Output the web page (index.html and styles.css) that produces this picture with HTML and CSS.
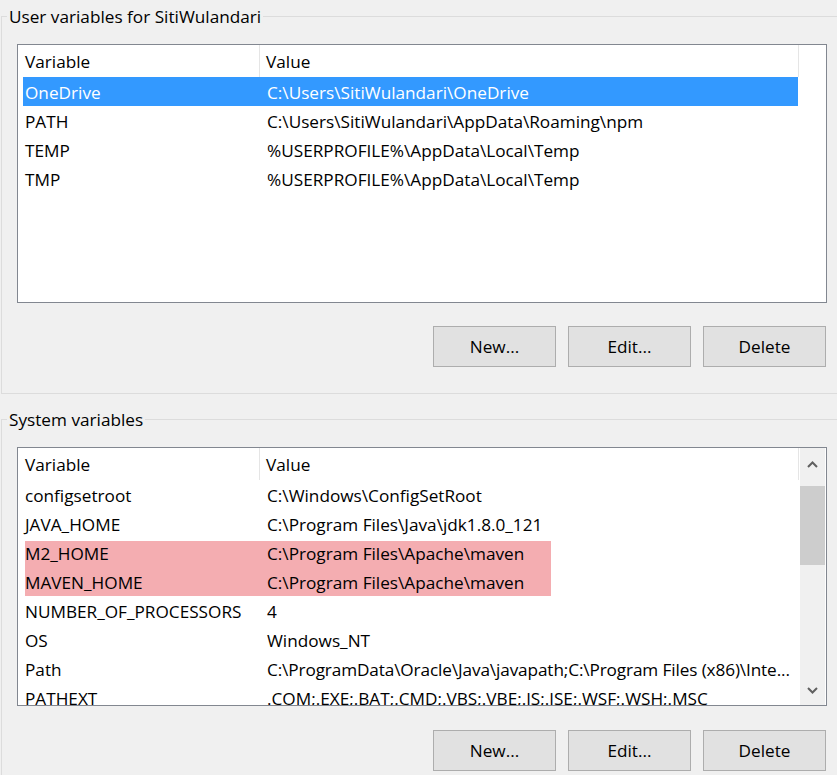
FILE: index.html
```html
<!DOCTYPE html>
<html>
<head>
<meta charset="utf-8">
<link rel="stylesheet" href="styles.css">
</head>
<body>
<fieldset class="group group-user">
  <legend>User variables for SitiWulandari</legend>
  <div class="panel">
    <div class="list">
      <div class="list-body">
        <div class="header"><div class="cell c-var">Variable</div><div class="cell c-val">Value</div></div>
        <div class="row selected"><div class="cell c-var">OneDrive</div><div class="cell c-val">C:\Users\SitiWulandari\OneDrive</div></div>
        <div class="row"><div class="cell c-var">PATH</div><div class="cell c-val">C:\Users\SitiWulandari\AppData\Roaming\npm</div></div>
        <div class="row"><div class="cell c-var">TEMP</div><div class="cell c-val">%USERPROFILE%\AppData\Local\Temp</div></div>
        <div class="row"><div class="cell c-var">TMP</div><div class="cell c-val">%USERPROFILE%\AppData\Local\Temp</div></div>
      </div>
    </div>
    <div class="buttons">
      <button class="btn">New...</button>
      <button class="btn">Edit...</button>
      <button class="btn">Delete</button>
    </div>
  </div>
</fieldset>
<fieldset class="group group-system">
  <legend>System variables</legend>
  <div class="panel">
    <div class="list">
      <div class="list-body">
        <div class="annot"></div>
        <div class="header"><div class="cell c-var">Variable</div><div class="cell c-val">Value</div></div>
        <div class="row"><div class="cell c-var">configsetroot</div><div class="cell c-val">C:\Windows\ConfigSetRoot</div></div>
        <div class="row"><div class="cell c-var">JAVA_HOME</div><div class="cell c-val">C:\Program Files\Java\jdk1.8.0_121</div></div>
        <div class="row"><div class="cell c-var">M2_HOME</div><div class="cell c-val">C:\Program Files\Apache\maven</div></div>
        <div class="row"><div class="cell c-var">MAVEN_HOME</div><div class="cell c-val">C:\Program Files\Apache\maven</div></div>
        <div class="row"><div class="cell c-var">NUMBER_OF_PROCESSORS</div><div class="cell c-val">4</div></div>
        <div class="row"><div class="cell c-var">OS</div><div class="cell c-val">Windows_NT</div></div>
        <div class="row"><div class="cell c-var">Path</div><div class="cell c-val c-long">C:\ProgramData\Oracle\Java\javapath;C:\Program Files (x86)\Inte...</div></div>
        <div class="row"><div class="cell c-var">PATHEXT</div><div class="cell c-val">.COM;.EXE;.BAT;.CMD;.VBS;.VBE;.JS;.JSE;.WSF;.WSH;.MSC</div></div>
      </div>
      <div class="scrollbar">
        <div class="sb-btn sb-up"><svg width="11" height="7" viewBox="0 0 11 7"><polyline points="1,6 5.5,1.5 10,6" fill="none" stroke="#606060" stroke-width="2"/></svg></div>
        <div class="sb-track"><div class="sb-thumb"></div></div>
        <div class="sb-btn sb-down"><svg width="11" height="7" viewBox="0 0 11 7"><polyline points="1,1 5.5,5.5 10,1" fill="none" stroke="#606060" stroke-width="2"/></svg></div>
      </div>
    </div>
    <div class="buttons buttons-system">
      <button class="btn">New...</button>
      <button class="btn">Edit...</button>
      <button class="btn">Delete</button>
    </div>
  </div>
</fieldset>
</body>
</html>
```
FILE: styles.css
```css
html, body {
  margin: 0;
  padding: 0;
}
body {
  width: 837px;
  height: 775px;
  overflow: hidden;
  background: #f0f0f0;
  font-family: "Open Sans", "Noto Sans", sans-serif;
  font-size: 17.2px;
  color: #000;
}
.group {
  margin: 5px -20px 0 1px;
  padding: 0 0 26px 0;
  border: 1px solid #dcdcdc;
  min-width: 0;
}
.group legend {
  margin-left: 5px;
  padding: 0 2px;
  line-height: 22px;
  font-size: 17.2px;
  position: relative;
  top: 1px;
}
.group-system {
  margin-top: 14px;
}
.panel {
  width: 810px;
  margin-left: 15px;
}
.list {
  margin-top: 17px;
  height: 259px;
  box-sizing: border-box;
  border: 1px solid #828790;
  background: #fff;
  display: flex;
  position: relative;
  z-index: 0;
}
.list-body {
  width: 782px;
  overflow: hidden;
  position: relative;
}
.header {
  display: flex;
  height: 32px;
  margin-left: 5px;
}
.row {
  display: flex;
  height: 29px;
  width: 775px;
  margin-left: 5px;
}
.cell {
  box-sizing: border-box;
  white-space: nowrap;
  overflow: hidden;
  line-height: 29px;
  padding-top: 1px;
}
.c-var {
  width: 237px;
  padding-left: 2px;
}
.c-val {
  width: 538px;
  padding-left: 7px;
}
.c-long {
  letter-spacing: -0.12px;
}
.header .cell {
  line-height: 30px;
  padding-top: 2px;
  border-right: 1px solid #e5e5e5;
}
.header .c-val {
  width: 539px;
  padding-left: 6px;
}
.row.selected {
  background: #3399ff;
  color: #fff;
}
.annot {
  position: absolute;
  left: 7px;
  top: 93px;
  width: 526px;
  height: 55px;
  background: #f4adb1;
  z-index: -1;
}
.scrollbar {
  width: 25px;
  background: #f0f0f0;
  display: flex;
  flex-direction: column;
}
.sb-btn {
  display: flex;
  align-items: center;
  justify-content: center;
}
.sb-up {
  height: 32px;
}
.sb-down {
  height: 29px;
}
.sb-track {
  flex: 1;
}
.sb-thumb {
  margin-top: 6px;
  height: 79px;
  background: #cdcdcd;
}
.buttons {
  display: flex;
  justify-content: flex-end;
  gap: 12px;
  margin-top: 23px;
  margin-right: 1px;
}
.buttons-system {
  margin-top: 24px;
}
.btn {
  width: 123px;
  height: 41px;
  box-sizing: border-box;
  background: #e1e1e1;
  border: 1px solid #adadad;
  border-radius: 0;
  padding: 0;
  font-family: inherit;
  font-size: 17.2px;
  color: #000;
}
```
